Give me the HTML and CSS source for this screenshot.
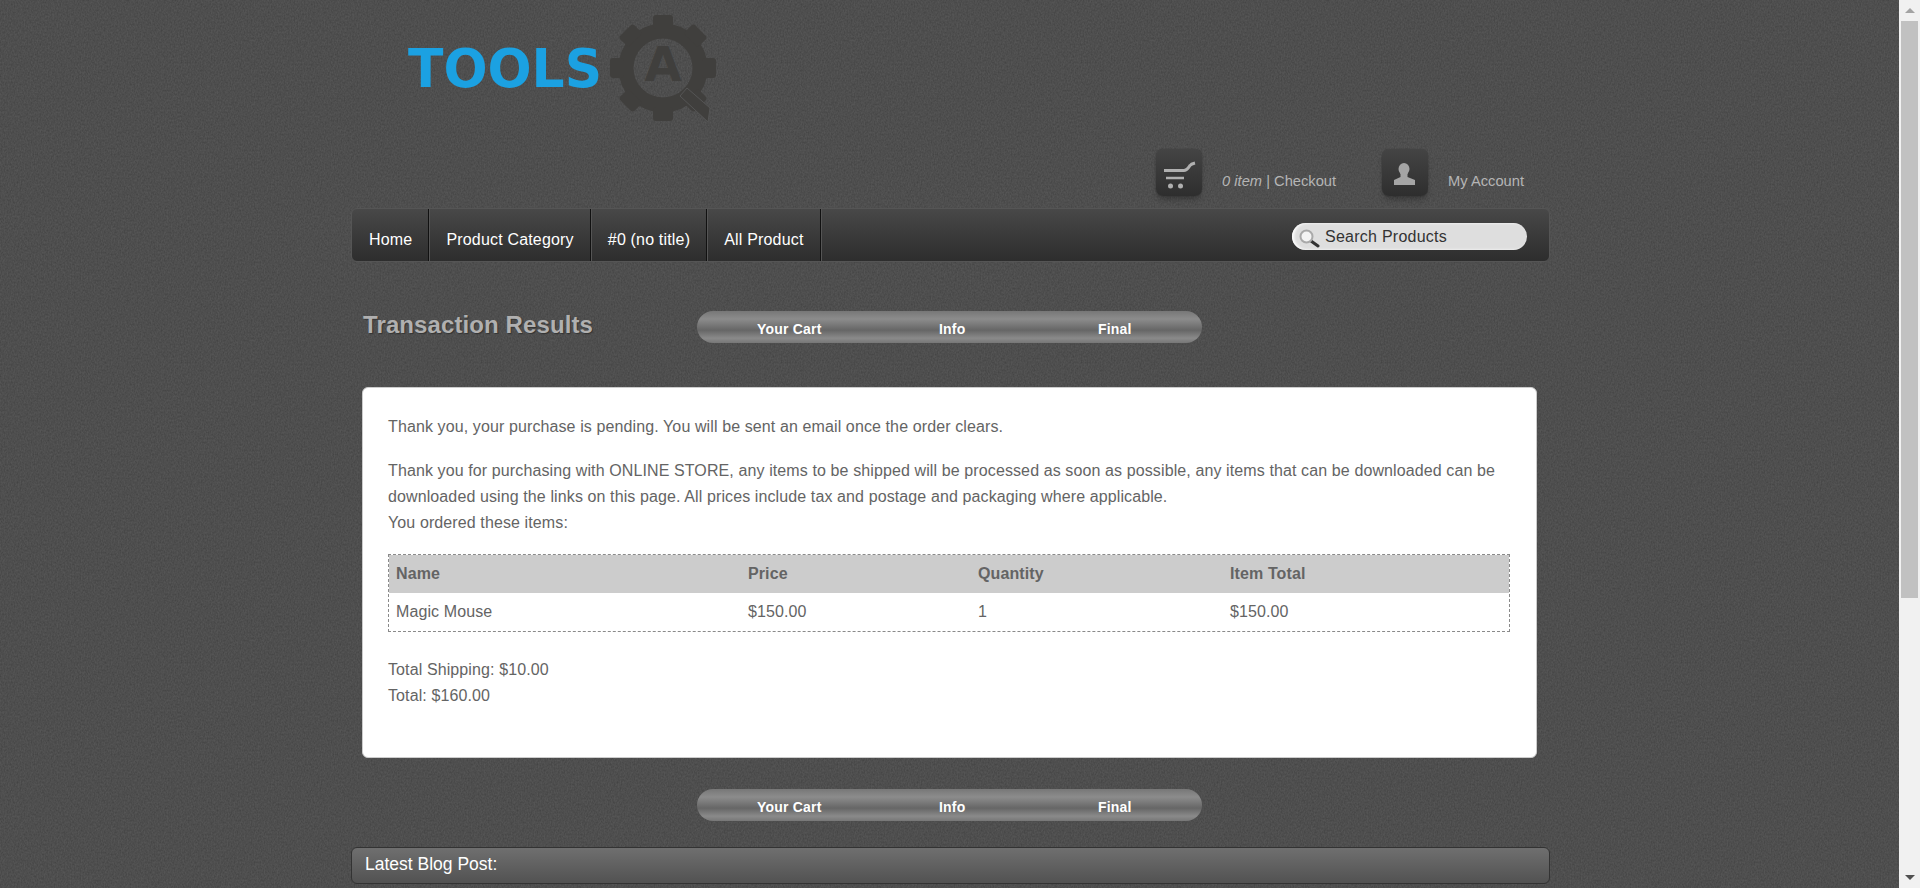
FILE: index.html
```html
<!DOCTYPE html>
<html lang="en">
<head>
    <meta charset="UTF-8">
    <meta name="viewport" content="width=device-width, initial-scale=1.0">
    <title>Transaction Results</title>
    <link rel="stylesheet" href="styles.css">
</head>
<body>
    <div class="page">
        <div class="content">
            <div class="wrap">
                <header class="header">
                    <div class="logo">
                        <svg width="330" height="125" viewBox="0 0 330 125">
                            <text x="2" y="87" class="logo-text" textLength="194" lengthAdjust="spacingAndGlyphs">TOOLS</text>
                            <g transform="translate(257 68)" fill="#403f3d">
                                <circle r="37" fill="none" stroke="#403f3d" stroke-width="15"/>
                                <rect x="-10" y="-53" width="20" height="14" rx="3"/>
                                <rect x="-10" y="-53" width="20" height="14" rx="3" transform="rotate(45)"/>
                                <rect x="-10" y="-53" width="20" height="14" rx="3" transform="rotate(90)"/>
                                <rect x="-10" y="-53" width="20" height="14" rx="3" transform="rotate(135)"/>
                                <rect x="-10" y="-53" width="20" height="14" rx="3" transform="rotate(180)"/>
                                <rect x="-10" y="-53" width="20" height="14" rx="3" transform="rotate(225)"/>
                                <rect x="-10" y="-53" width="20" height="14" rx="3" transform="rotate(270)"/>
                                <rect x="-10" y="-53" width="20" height="14" rx="3" transform="rotate(315)"/>
                                <text x="0" y="13" text-anchor="middle" class="logo-a">A</text>
                                <path d="M17 28L24 20L47 40L45 54Z" stroke="#555" stroke-width="1"/>
                            </g>
                        </svg>
                    </div>
                    <div class="user-links">
                        <div class="user-link">
                            <span class="icon-box">
                                <svg width="46" height="47" viewBox="0 0 46 47" fill="none" stroke="#b0b0b0">
                                    <path d="M8 21.5H28C31 21.5 32 19 34 16.5C35 15 37 14.5 39 14" stroke-width="3"/>
                                    <path d="M10 29H28" stroke-width="2.5"/>
                                    <circle cx="14.5" cy="37" r="2.5" fill="#b0b0b0" stroke="none"/>
                                    <circle cx="24.5" cy="37" r="2.5" fill="#b0b0b0" stroke="none"/>
                                </svg>
                            </span>
                            <span class="user-text"><em>0 item</em> | Checkout</span>
                        </div>
                        <div class="user-link account">
                            <span class="icon-box">
                                <svg width="46" height="47" viewBox="0 0 46 47" fill="#a5a5a5">
                                    <ellipse cx="22" cy="20" rx="5.5" ry="6"/>
                                    <path d="M18.5 24H25.5V28L33 31V36H12V31L18.5 28Z"/>
                                </svg>
                            </span>
                            <span class="user-text">My Account</span>
                        </div>
                    </div>
                </header>

                <nav class="nav">
                    <a class="nav-item">Home</a>
                    <a class="nav-item">Product Category</a>
                    <a class="nav-item">#0 (no title)</a>
                    <a class="nav-item">All Product</a>
                    <div class="search">
                        <svg width="22" height="22" viewBox="0 0 22 22">
                            <path d="M13 15L20 20" stroke="#333" stroke-width="3" stroke-linecap="round"/>
                            <circle cx="8.5" cy="10.5" r="6" fill="#f4f4f4" stroke="#a9a9a9" stroke-width="2"/>
                        </svg>
                        <span>Search Products</span>
                    </div>
                </nav>

                <div class="title-row">
                    <h1 class="title">Transaction Results</h1>
                    <div class="steps">
                        <span>Your Cart</span>
                        <span>Info</span>
                        <span>Final</span>
                    </div>
                </div>

                <div class="box">
                    <p>Thank you, your purchase is pending. You will be sent an email once the order clears.</p>
                    <p>Thank you for purchasing with ONLINE STORE, any items to be shipped will be processed as soon as possible, any items that can be downloaded can be downloaded using the links on this page. All prices include tax and postage and packaging where applicable.<br>You ordered these items:</p>
                    <table class="items">
                        <thead>
                            <tr>
                                <th class="col-name">Name</th>
                                <th class="col-price">Price</th>
                                <th class="col-qty">Quantity</th>
                                <th>Item Total</th>
                            </tr>
                        </thead>
                        <tbody>
                            <tr>
                                <td>Magic Mouse</td>
                                <td>$150.00</td>
                                <td>1</td>
                                <td>$150.00</td>
                            </tr>
                        </tbody>
                    </table>
                    <p class="totals">Total Shipping: $10.00<br>Total: $160.00</p>
                </div>

                <div class="steps steps-bottom">
                    <span>Your Cart</span>
                    <span>Info</span>
                    <span>Final</span>
                </div>

                <div class="blog-bar">Latest Blog Post:</div>
            </div>
        </div>
        <div class="scrollbar">
            <div class="arrow arrow-up"></div>
            <div class="thumb-track"><div class="thumb"></div></div>
            <div class="arrow arrow-down"></div>
        </div>
    </div>
</body>
</html>
```

FILE: styles.css
```css
html, body {
    margin: 0;
    padding: 0;
    height: 100%;
    overflow: hidden;
}
body {
    font-family: "Liberation Sans", Arial, sans-serif;
    font-size: 16px;
    color: #646464;
    background-color: #505050;
}
.page {
    display: flex;
    height: 888px;
    overflow: hidden;
}
.content {
    flex: 1;
    min-width: 0;
    background-color: #555;
    background-image: url("data:image/svg+xml,%3Csvg xmlns='http://www.w3.org/2000/svg' width='300' height='300'%3E%3Cfilter id='n' color-interpolation-filters='sRGB'%3E%3CfeTurbulence type='fractalNoise' baseFrequency='.7 .5' numOctaves='3' stitchTiles='stitch'/%3E%3CfeColorMatrix values='0 0 0 0 0 0 0 0 0 0 0 0 0 0 0 0 0 0 .3 -.07'/%3E%3C/filter%3E%3Crect width='300' height='300' filter='url(%23n)'/%3E%3C/svg%3E");
}
.wrap {
    width: 1199px;
    margin-left: 351px;
}

/* header */
.header {
    height: 208px;
    display: flex;
    flex-direction: column;
    justify-content: space-between;
}
.logo {
    margin-left: 55px;
    height: 125px;
}
.logo svg {
    display: block;
}
.logo-text {
    font-family: "DejaVu Sans", sans-serif;
    font-weight: bold;
    font-size: 54px;
    fill: #1ba1e2;
}
.logo-a {
    font-family: "DejaVu Sans", sans-serif;
    font-weight: bold;
    font-size: 48px;
}
.user-links {
    display: flex;
    justify-content: flex-end;
    padding-right: 26px;
    margin-bottom: 12px;
}
.user-link {
    display: flex;
    align-items: flex-end;
}
.account {
    margin-left: 46px;
}
.icon-box {
    display: block;
    width: 46px;
    height: 47px;
    border-radius: 7px;
    background: linear-gradient(#444, #2e2e2e);
    box-shadow: 0 5px 6px -2px rgba(0, 0, 0, .3), 0 0 1px rgba(0, 0, 0, .5);
}
.icon-box svg {
    display: block;
}
.user-text {
    font-size: 14.7px;
    color: #b5b5b5;
    margin-left: 20px;
    padding-bottom: 7px;
}

/* nav */
.nav {
    display: flex;
    align-items: stretch;
    height: 54px;
    border-radius: 6px;
    box-sizing: border-box;
    border: 1px solid #555;
    background: linear-gradient(#484848, #2d2d2d);
}
.nav-item {
    display: flex;
    align-items: center;
    padding: 10px 16px 0 17px;
    color: #fff;
    letter-spacing: .18px;
    border-right: 1px solid #111;
    box-shadow: 1px 0 0 #555;
}
.search {
    display: flex;
    align-items: center;
    width: 235px;
    height: 27px;
    margin: 14px 22px 0 auto;
    padding-left: 6px;
    box-sizing: border-box;
    border-radius: 14px;
    background: #dedede;
    box-shadow: inset 2px 0 3px #fff;
    color: #333;
    letter-spacing: .25px;
}
.search span {
    margin-left: 5px;
}

/* title and steps */
.title-row {
    display: flex;
    align-items: flex-start;
    height: 125px;
}
.title {
    margin: 49px 0 0 12px;
    width: 334px;
    font-size: 24px;
    font-weight: bold;
    letter-spacing: .1px;
    color: #b0b0b0;
    text-shadow: 1px 1px 1px #333;
}
.steps {
    display: flex;
    width: 505px;
    height: 32px;
    box-sizing: border-box;
    padding-left: 60px;
    align-items: center;
    border-radius: 16px;
    color: #fff;
    font-size: 14px;
    font-weight: bold;
    letter-spacing: .2px;
    background: linear-gradient(#777, #8c8c8c 25%, #666 60%, #8a8a8a 85%, #777);
}
.title-row .steps {
    margin-top: 49px;
}
.steps span {
    margin-top: 4px;
}
.steps span:nth-child(1) {
    width: 182px;
}
.steps span:nth-child(2) {
    width: 159px;
}
.steps-bottom {
    margin: 31px 0 0 346px;
}

/* white box */
.box {
    width: 1175px;
    height: 371px;
    box-sizing: border-box;
    margin-left: 11px;
    padding: 26px 26px 0 25px;
    background: #fff;
    border: 1px solid #ccc;
    border-radius: 6px;
    line-height: 26px;
    font-size: 16px;
    letter-spacing: .11px;
}
.box p {
    margin: 0 0 18px;
}
.items {
    width: 100%;
    table-layout: fixed;
    border-collapse: separate;
    border-spacing: 0;
    border: 1px dashed #8a8a8a;
}
.items th, .items td {
    box-sizing: border-box;
    text-align: left;
    padding: 0 7px;
    height: 38px;
}
.items th {
    background: #ccc;
}
.col-name {
    width: 352px;
}
.col-price {
    width: 230px;
}
.col-qty {
    width: 252px;
}
.box .totals {
    margin-top: 25px;
}

/* blog bar */
.blog-bar {
    margin-top: 26px;
    height: 37px;
    box-sizing: border-box;
    padding: 6px 13px;
    font-size: 17.5px;
    color: #fff;
    border: 1px solid #333;
    border-radius: 6px;
    background: linear-gradient(#6f6f6f, #525252);
}

/* fake scrollbar, the screenshot browser hides the real one */
.scrollbar {
    width: 21px;
    flex: none;
    background: #f1f1f1;
    display: flex;
    flex-direction: column;
}
.arrow {
    height: 21px;
    display: flex;
    align-items: center;
    justify-content: center;
}
.arrow::after {
    content: "";
    border-left: 5px solid transparent;
    border-right: 5px solid transparent;
}
.arrow-up::after {
    border-bottom: 5px solid #a3a3a3;
}
.arrow-down::after {
    border-top: 5px solid #505050;
}
.thumb-track {
    flex: 1;
    padding: 0 2px;
}
.thumb {
    height: 577px;
    background: #c1c1c1;
}
```
